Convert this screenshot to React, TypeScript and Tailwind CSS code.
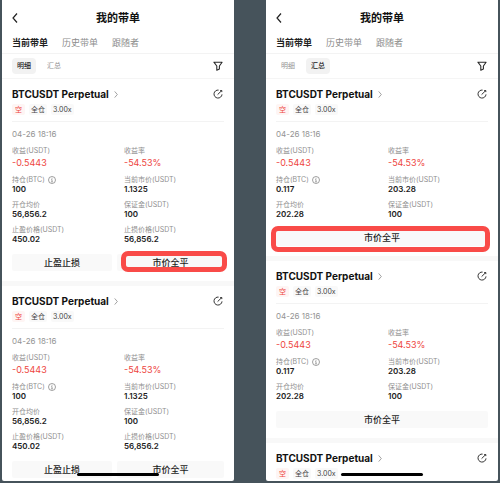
import clsx from 'clsx';

interface Field {
  label: string;
  value: string;
  info?: boolean;
  loss?: boolean;
}

interface PhoneProps {
  id: string;
  view: '明细' | '汇总';
  fields: Field[];
  actions: string[];
  cards: number;
  peek?: boolean;
}

const TABS = ['当前带单', '历史带单', '跟随者'];
const VIEWS = ['明细', '汇总'];

const PROFIT: Field[] = [
  { label: '收益(USDT)', value: '-0.5443', loss: true },
  { label: '收益率', value: '-54.53%', loss: true },
];

const DETAIL_FIELDS: Field[] = [
  ...PROFIT,
  { label: '持仓(BTC)', value: '100', info: true },
  { label: '当前市价(USDT)', value: '1.1325' },
  { label: '开仓均价', value: '56,856.2' },
  { label: '保证金(USDT)', value: '100' },
  { label: '止盈价格(USDT)', value: '450.02' },
  { label: '止损价格(USDT)', value: '56,856.2' },
];

const SUMMARY_FIELDS: Field[] = [
  ...PROFIT,
  { label: '持仓(BTC)', value: '0.117', info: true },
  { label: '当前市价(USDT)', value: '203.28' },
  { label: '开仓均价', value: '202.28' },
  { label: '保证金(USDT)', value: '100' },
];

function BackIcon() {
  return (
    <svg viewBox="0 0 6 10" className="h-[10px] w-[6px]" fill="none" stroke="#222" strokeWidth="1.2">
      <path d="M5 0.5 1 5l4 4.5" />
    </svg>
  );
}

function FilterIcon() {
  return (
    <svg viewBox="0 0 10 10" className="size-[10px]" fill="none" stroke="#2a2a2a" strokeWidth="1.1" strokeLinejoin="round">
      <path d="M0.9 1.2h8.2L6.4 5v3.1L3.8 9.3V5z" />
    </svg>
  );
}

function ShareIcon() {
  return (
    <svg viewBox="0 0 10 10" className="size-[10px]" fill="none" stroke="#333" strokeWidth="1">
      <path d="M5.6 1.1A4 4 0 1 0 9 5.4" />
      <path d="M4.6 5.6 8.6 1.7M7.2 1.5h1.6v1.6" />
    </svg>
  );
}

function InfoIcon() {
  return (
    <svg viewBox="0 0 8 8" className="size-2" fill="none" stroke="#777" strokeWidth="0.7">
      <circle cx="4" cy="4" r="3.5" />
      <path d="M4 1.9v.8M3.4 3.5H4v2.4M3.3 5.9h1.4" />
    </svg>
  );
}

function Stat({ label, value, info, loss }: Field) {
  return (
    <div>
      <dt className="flex h-[11px] items-center gap-[3px] text-[7px] leading-[11px] whitespace-nowrap text-[#8f8f8f]">
        {label}
        {info && <InfoIcon />}
      </dt>
      <dd
        className={clsx(
          loss
            ? 'mt-px text-[9px] leading-[12px] text-[#ee4540]'
            : 'text-[8px] leading-[9px] font-semibold text-[#1c1c1c]',
        )}
      >
        {value}
      </dd>
    </div>
  );
}

function CardHeader() {
  return (
    <header className="border-b border-[#f3f3f3] pt-[7px] pb-[6px]">
      <div className="flex h-4 items-center justify-between">
        <a href="#position" className="flex items-center gap-[5px]">
          <h2 className="text-[10px] leading-4 font-bold text-[#111]">BTCUSDT Perpetual</h2>
          <svg viewBox="0 0 4 8" className="h-[7px] w-1" fill="none" stroke="#888" strokeWidth="0.9">
            <path d="M0.5 0.5 3.5 4l-3 3.5" />
          </svg>
        </a>
        <button type="button" aria-label="分享" className="mr-px">
          <ShareIcon />
        </button>
      </div>
      <div className="mt-[2px] flex gap-1 text-[7px] leading-[11px] text-[#444]">
        <span className="rounded-xs bg-[#fef5f4] px-[3px] text-[#ee4540]">空</span>
        <span className="rounded-xs bg-[#f9f9f9] px-[2px]">全仓</span>
        <span className="rounded-xs bg-[#f9f9f9] px-[2px]">3.00x</span>
      </div>
    </header>
  );
}

function PositionCard({ fields, actions, marked }: { fields: Field[]; actions: string[]; marked: boolean }) {
  const single = actions.length === 1;

  return (
    <article className="border-b-[5px] border-[#f8f8f8] px-2.5 pb-2.5">
      <CardHeader />

      <time className="mt-[7px] block text-[8px] leading-[11px] text-[#949494]">04-26 18:16</time>
      <dl className="mt-[5px] grid grid-cols-2 gap-x-3 gap-y-[5px]">
        {fields.map((field) => (
          <Stat key={field.label} {...field} />
        ))}
      </dl>

      <div className="mt-2.5 flex gap-[5px]">
        {actions.map((action, i) => (
          <div key={action} className={clsx('relative', i === 0 ? 'flex-[15]' : 'flex-[16]')}>
            <button
              type="button"
              className="block h-[17px] w-full rounded-xs bg-[#f9f9f9] text-[9px] leading-4 font-medium text-[#1c1c1c]"
            >
              {action}
            </button>
            {marked && i === actions.length - 1 && (
              <span
                className={clsx(
                  'pointer-events-none absolute rounded-[7px] border-5 border-[#f94b48]',
                  single ? '-top-[3px] -right-[2px] -bottom-[6px] -left-[5px]' : '-top-[3px] -right-[3px] -bottom-px left-[4px]',
                )}
              />
            )}
          </div>
        ))}
      </div>
    </article>
  );
}

function Phone({ id, view, fields, actions, cards, peek = false }: PhoneProps) {
  return (
    <section aria-labelledby={id} className="relative min-w-0 flex-1 overflow-hidden rounded-b-xs bg-white">
      <header className="grid h-[35px] grid-cols-[20px_1fr_20px] items-center px-2.5">
        <button type="button" aria-label="返回">
          <BackIcon />
        </button>
        <h1 id={id} className="text-center text-[11px] leading-4 font-bold text-[#111]">
          我的带单
        </h1>
      </header>

      <nav className="flex h-[19px] gap-3.5 border-b border-[#f3f3f3] px-2.5 text-[9px] leading-4">
        {TABS.map((tab, i) => (
          <a key={tab} href="#tab" className={i === 0 ? 'font-bold text-[#222]' : 'text-[#8c8c8c]'}>
            {tab}
          </a>
        ))}
      </nav>

      <div className="flex h-[25px] items-center justify-between border-b border-[#f5f5f5] px-2.5">
        <div className="flex gap-1.5 text-[7px] leading-4">
          {VIEWS.map((item) => (
            <button
              key={item}
              type="button"
              className={clsx(
                'h-4 rounded-sm px-[5px]',
                item === view ? 'bg-[#f2f2f2] font-medium text-[#222]' : 'text-[#949494]',
              )}
            >
              {item}
            </button>
          ))}
        </div>
        <button type="button" aria-label="筛选" className="mr-px">
          <FilterIcon />
        </button>
      </div>

      {Array.from({ length: cards }, (_, i) => (
        <PositionCard key={i} fields={fields} actions={actions} marked={i === 0} />
      ))}
      {peek && (
        <article className="px-2.5">
          <CardHeader />
        </article>
      )}

      {/* Home indicator */}
      <div className="absolute inset-x-0 bottom-[5px] mx-auto h-[3px] w-[82px] rounded-full bg-black" />
    </section>
  );
}

export default function App() {
  return (
    <main className="flex h-screen gap-8 bg-[#46535b] px-0.5 pb-0.5 font-['Inter','Noto_Sans_CJK_SC',sans-serif]">
      <Phone id="detail-title" view="明细" fields={DETAIL_FIELDS} actions={['止盈止损', '市价全平']} cards={2} />
      <Phone id="summary-title" view="汇总" fields={SUMMARY_FIELDS} actions={['市价全平']} cards={2} peek />
    </main>
  );
}
